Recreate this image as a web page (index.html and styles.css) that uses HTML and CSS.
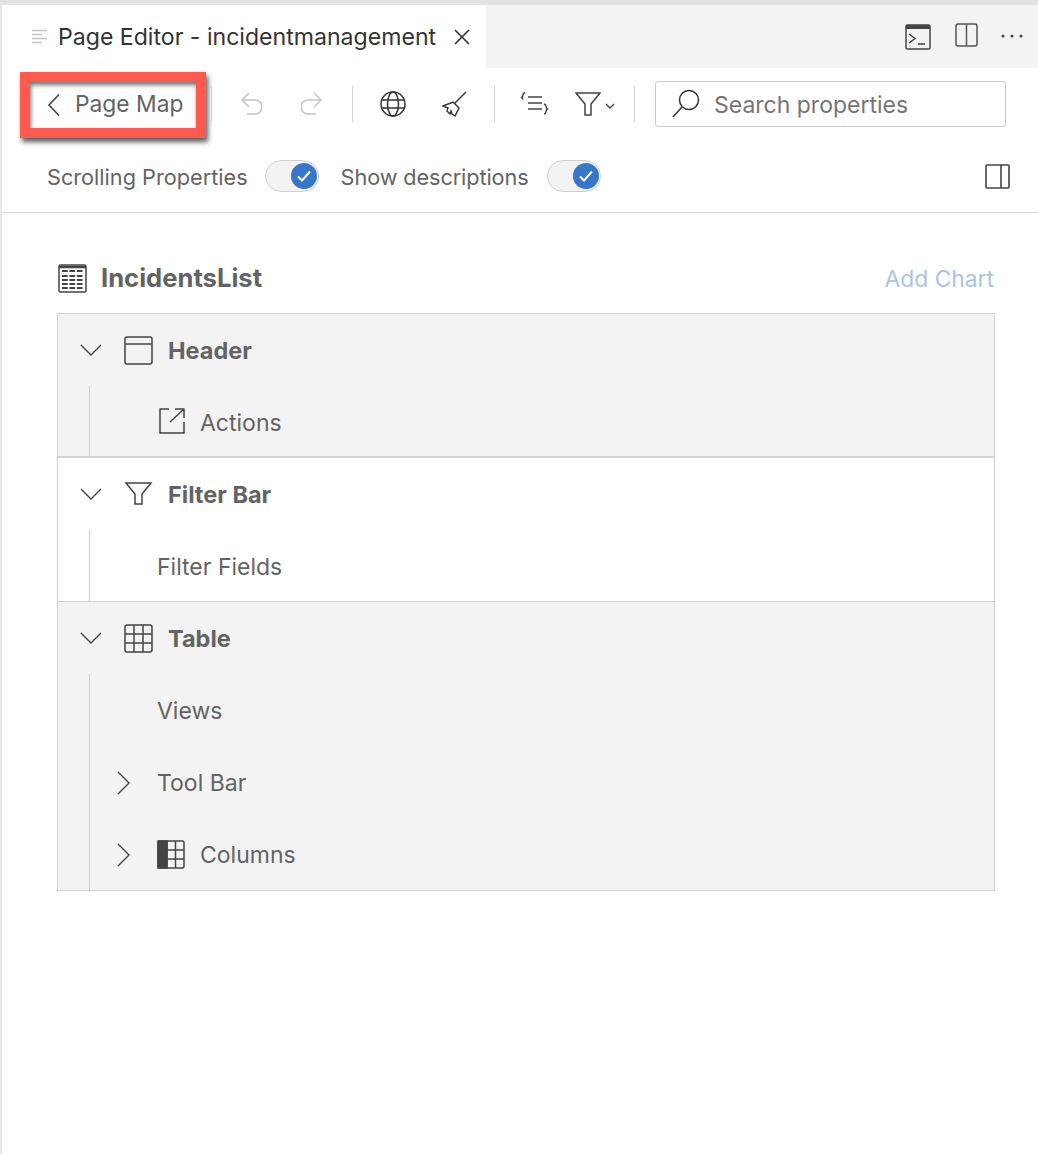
FILE: index.html
```html
<!DOCTYPE html>
<html lang="en">

<head>
    <meta charset="UTF-8">
    <title>Page Editor - incidentmanagement</title>
    <link rel="stylesheet" href="styles.css">
</head>

<body>
    <!-- Tab bar -->
    <div class="tabs">
        <div class="tab">
            <svg class="tab-icon" width="16" height="16" viewBox="0 0 16 16" fill="none" stroke="#c4c4c4" stroke-width="1.5"><path d="M0 1.5h15M0 5.5h10M0 9.5h15M0 13.5h10"/></svg>
            <span class="tab-title">Page Editor - incidentmanagement</span>
            <svg class="tab-close" width="18" height="18" viewBox="0 0 18 18" fill="none" stroke="#333" stroke-width="1.6"><path d="M2 2l14 14M16 2L2 16"/></svg>
        </div>
        <div class="tab-actions">
            <svg width="26" height="26" viewBox="0 0 26 26" fill="none" stroke="#444" stroke-width="1.5"><rect x="1" y="1" width="24" height="24" rx="1.5"/><path d="M1 3h24" stroke-width="4"/><path d="M4 10l6 4.5L4 19M13 20h7"/></svg>
            <svg class="split-icon" width="23" height="24" viewBox="0 0 23 24" fill="none" stroke="#555" stroke-width="1.5"><rect x="1" y="1" width="21" height="22" rx="2"/><path d="M11.5 1v22"/></svg>
            <svg class="more-icon" width="22" height="6" viewBox="0 0 22 6" fill="#444"><circle cx="2" cy="3" r="1.5"/><circle cx="11" cy="3" r="1.5"/><circle cx="20" cy="3" r="1.5"/></svg>
        </div>
    </div>

    <!-- Toolbar -->
    <div class="toolbar">
        <div class="page-map">
            <svg width="14" height="24" viewBox="0 0 14 24" fill="none" stroke="#444" stroke-width="1.6"><path d="M12 1.5L2 12l10 10.5"/></svg>
            <span>Page Map</span>
        </div>
        <div class="sep sep-1"></div>
        <svg class="undo" width="22" height="24" viewBox="0 0 22 24" fill="none" stroke="#c4c4c4" stroke-width="1.6"><path d="M9 1L2 8l7 7M2 8h13a6 6 0 0 1 0 14H7"/></svg>
        <svg class="redo" width="22" height="24" viewBox="0 0 22 24" fill="none" stroke="#c4c4c4" stroke-width="1.6"><path d="M13 1l7 7-7 7M20 8H7a6 6 0 0 0 0 14h8"/></svg>
        <div class="sep sep-2"></div>
        <svg class="globe" width="26" height="26" viewBox="0 0 26 26" fill="none" stroke="#333" stroke-width="1.5"><circle cx="13" cy="13" r="12"/><ellipse cx="13" cy="13" rx="5.5" ry="12"/><path d="M2 9h22M2 17h22"/></svg>
        <svg class="broom" width="26" height="26" viewBox="0 0 26 26" fill="none" stroke="#333" stroke-width="1.4"><path d="M24 1L13 12M1 15l10-4 6 6-4 8-3-2-1-3-1 3-3-3 1-3z"/></svg>
        <div class="sep sep-3"></div>
        <svg class="format" width="29" height="26" viewBox="0 0 29 26" fill="none" stroke="#444" stroke-width="1.4"><path d="M5 1.5Q3 2 3 4t-2 2.5Q3 7 3 8.500M8 6h14M8 12h14M8 18h14M24 13q2 .5 2 2.500t2 2.500q-2 .5-2 2.500t-2 2.500"/></svg>
        <svg class="filter" width="26" height="24" viewBox="0 0 26 24" fill="none" stroke="#444" stroke-width="1.5"><path d="M1 1h24L16 12v11h-6V12z"/></svg>
        <svg class="filter-caret" width="10" height="6" viewBox="0 0 10 6" fill="none" stroke="#444" stroke-width="1.4"><path d="M1 1l4 4 4-4"/></svg>
        <div class="sep sep-4"></div>
        <div class="search">
            <svg width="28" height="30" viewBox="0 0 28 30" fill="none" stroke="#333" stroke-width="1.5"><circle cx="17" cy="11" r="9.500"/><path d="M10 18L1 28"/></svg>
            <span>Search properties</span>
        </div>
    </div>

    <!-- Options -->
    <div class="options">
        <span class="option-label">Scrolling Properties</span>
        <div class="toggle"><svg width="14" height="12" viewBox="0 0 14 12" fill="none" stroke="#fff" stroke-width="2"><path d="M1 6.500l4 4 8-9"/></svg></div>
        <span class="option-label option-second">Show descriptions</span>
        <div class="toggle"><svg width="14" height="12" viewBox="0 0 14 12" fill="none" stroke="#fff" stroke-width="2"><path d="M1 6.500l4 4 8-9"/></svg></div>
        <svg class="panel-icon" width="25" height="25" viewBox="0 0 25 25" fill="none" stroke="#444" stroke-width="1.6"><rect x="1" y="1" width="23" height="23" rx="1"/><path d="M16 1v23"/></svg>
    </div>

    <!-- Page map -->
    <div class="content">
        <div class="content-head">
            <svg width="29" height="29" viewBox="0 0 29 29" fill="none" stroke="#444" stroke-width="1.500"><rect x="1" y="1" width="27" height="27" rx="1.500"/><path d="M1 3h27" stroke-width="2.500"/><path d="M4 7h21M4 12h21M4 16h21M4 20h21M4 24h21" stroke-width="2" stroke-dasharray="5.700 1.700"/></svg>
            <span class="content-title">IncidentsList</span>
            <span class="add-chart">Add Chart</span>
        </div>

        <div class="map">
            <div class="group group-shaded group-header">
                <div class="group-row">
                    <svg class="chevron-down" width="22" height="12" viewBox="0 0 22 12" fill="none" stroke="#444" stroke-width="1.4"><path d="M1 1l10 10L21 1"/></svg>
                    <svg class="group-icon" width="29" height="29" viewBox="0 0 29 29" fill="none" stroke="#444" stroke-width="1.500"><rect x="1" y="1" width="27" height="27" rx="2"/><path d="M1 8h27"/></svg>
                    <span class="group-name">Header</span>
                </div>
                <div class="children">
                    <div class="child child-icon child-actions">
                        <svg width="26" height="26" viewBox="0 0 26 26" fill="none" stroke="#444" stroke-width="1.500"><path d="M10 1H1v24h24V14M11 14L25 1M16 1h9v9"/></svg>
                        <span>Actions</span>
                    </div>
                </div>
            </div>

            <div class="group group-filter">
                <div class="group-row">
                    <svg class="chevron-down" width="22" height="12" viewBox="0 0 22 12" fill="none" stroke="#444" stroke-width="1.4"><path d="M1 1l10 10L21 1"/></svg>
                    <svg class="group-icon" width="29" height="24" viewBox="0 0 29 24" fill="none" stroke="#444" stroke-width="1.500"><path d="M2 1h25L18 12v10h-7V12z"/></svg>
                    <span class="group-name">Filter Bar</span>
                </div>
                <div class="children">
                    <div class="child"><span>Filter Fields</span></div>
                </div>
            </div>

            <div class="group group-shaded group-table">
                <div class="group-row">
                    <svg class="chevron-down" width="22" height="12" viewBox="0 0 22 12" fill="none" stroke="#444" stroke-width="1.4"><path d="M1 1l10 10L21 1"/></svg>
                    <svg class="group-icon" width="29" height="29" viewBox="0 0 29 29" fill="none" stroke="#444" stroke-width="1.500"><rect x="1" y="1" width="27" height="27" rx="2"/><path d="M1 10h27M1 19h27M10 1v27M19 1v27"/></svg>
                    <span class="group-name">Table</span>
                </div>
                <div class="children">
                    <div class="child"><span>Views</span></div>
                    <div class="child">
                        <svg class="chevron-right" width="13" height="24" viewBox="0 0 13 24" fill="none" stroke="#444" stroke-width="1.4"><path d="M1 1l11 11L1 23"/></svg>
                        <span>Tool Bar</span>
                    </div>
                    <div class="child child-icon">
                        <svg class="chevron-right" width="13" height="24" viewBox="0 0 13 24" fill="none" stroke="#444" stroke-width="1.4"><path d="M1 1l11 11L1 23"/></svg>
                        <svg width="28" height="29" viewBox="0 0 28 29" fill="none" stroke="#444" stroke-width="1.500"><rect x="1" y="1" width="26" height="27" rx="1.500"/><path d="M1 10h26M1 19h26M10 1v27M18.500 1v27"/><rect x="1" y="1" width="9" height="27" fill="#444"/></svg>
                        <span>Columns</span>
                    </div>
                </div>
            </div>
        </div>
    </div>
</body>

</html>
```

FILE: styles.css
```css
* {
    box-sizing: border-box;
}

html, body {
    height: 100%;
}

body {
    font-family: Inter, "Noto Sans", sans-serif;
    margin: 0;
    background-color: #fff;
    border-top: 5px solid #e3e3e3;
    border-left: 2px solid #e8e8e8;
    color: #636363;
}

svg {
    display: block;
    flex: none;
}

/* tab bar */
.tabs {
    display: flex;
    height: 63px;
    background-color: #f3f3f3;
}

.tab {
    display: flex;
    align-items: center;
    width: 484px;
    height: 63px;
    padding: 0 0 0 30px;
    background-color: #fff;
}

.tab-title {
    margin-left: 10px;
    font-size: 23.1px;
    color: #333;
    white-space: nowrap;
}

.tab-close {
    margin-left: 17px;
}

.tab-actions {
    display: flex;
    align-items: center;
    flex: 1;
    padding-left: 419px;
}

.split-icon {
    margin-left: 24px;
    margin-bottom: 3px;
}

.more-icon {
    margin-left: 23px;
    margin-bottom: 2px;
}

/* toolbar */
.toolbar {
    display: flex;
    align-items: center;
    height: 72px;
    padding-left: 18px;
}

.page-map {
    display: flex;
    align-items: center;
    width: 186px;
    height: 66px;
    margin-top: 2px;
    padding-left: 17px;
    border: 10px solid #ff5a4d;
    background-color: #fff;
    box-shadow: 2px 4px 5px rgba(0, 0, 0, 0.65), inset 1px 3px 4px rgba(0, 0, 0, 0.55);
    font-size: 22.8px;
    white-space: nowrap;
}

.page-map span {
    margin-left: 14px;
    padding-bottom: 3px;
}

.sep {
    width: 1px;
    height: 36px;
    background-color: #d4d4d4;
}

.sep-1 { margin-left: 5px; }
.undo { margin-left: 28px; }
.redo { margin-left: 39px; }
.sep-2 { margin-left: 29px; }
.globe { margin-left: 27px; }
.broom { margin-left: 36px; }
.sep-3 { margin-left: 26px; }
.format { margin-left: 25px; }
.filter { margin-left: 26px; }
.filter-caret { margin-left: 4px; margin-top: 3px; }
.sep-4 { margin-left: 19px; }

.search {
    display: flex;
    align-items: center;
    width: 351px;
    height: 46px;
    margin-left: 20px;
    padding-left: 16px;
    border: 1px solid #c8c8c8;
    border-radius: 3px;
    font-size: 23px;
    color: #757575;
}

.search span {
    margin-left: 14px;
    padding-top: 2px;
    white-space: nowrap;
}

/* options row */
.options {
    display: flex;
    align-items: center;
    height: 73px;
    padding: 0 28px 0 45px;
    border-bottom: 1px solid #d9d9d9;
    font-size: 21.7px;
}

.option-label {
    padding-top: 2px;
    white-space: nowrap;
}

.option-second {
    margin-left: 22px;
    margin-right: 1px;
    letter-spacing: -0.1px;
}

.toggle {
    display: flex;
    align-items: center;
    justify-content: center;
    position: relative;
    width: 54px;
    height: 32px;
    margin-left: 17px;
    border: 1px solid #cfcfcf;
    border-radius: 16px;
    background-color: #f3f3f3;
}

.toggle::after {
    content: "";
    position: absolute;
    top: 2px;
    right: 1px;
    width: 26px;
    height: 26px;
    border-radius: 50%;
    background-color: #3578c9;
}

.toggle svg {
    position: absolute;
    top: 9px;
    right: 7px;
    z-index: 1;
}

.panel-icon {
    margin-left: auto;
}

/* page map */
.content {
    padding: 0 43px 0 55px;
}

.content-head {
    display: flex;
    align-items: center;
    height: 100px;
    padding: 30px 0 0 1px;
}

.content-title {
    margin-left: 14px;
    padding-bottom: 2px;
    font-size: 25.6px;
    font-weight: 700;
}

.add-chart {
    margin-left: auto;
    margin-right: 1px;
    font-size: 22.8px;
    color: #a9c5e6;
}

.map {
    border: 1px solid #cfcfcf;
}

.group-row {
    display: flex;
    align-items: center;
    height: 72px;
    padding-left: 22px;
}

.group-icon {
    margin-left: 22px;
}

.group-name {
    margin-left: 15px;
    font-size: 23.5px;
    font-weight: 700;
}

.group-shaded {
    background-color: #f3f3f3;
}

.group-header {
    border-bottom: 2px solid #d4d4d4;
}

.group-table {
    border-top: 1px solid #cfcfcf;
}

.children {
    margin-left: 31px;
    border-left: 1px solid #cfcfcf;
}

.child {
    display: flex;
    align-items: center;
    height: 72px;
    padding-left: 67px;
    position: relative;
    font-size: 23px;
}

.child span {
    padding-top: 2px;
}

.group-header .child {
    height: 70px;
}

.group-filter .child {
    height: 71px;
}

.child-actions svg {
    margin-left: 2px;
}

.child-actions span {
    padding-top: 4px;
}

.child-icon span {
    margin-left: 15px;
}

.chevron-right {
    position: absolute;
    left: 27px;
    top: 25px;
}
```
